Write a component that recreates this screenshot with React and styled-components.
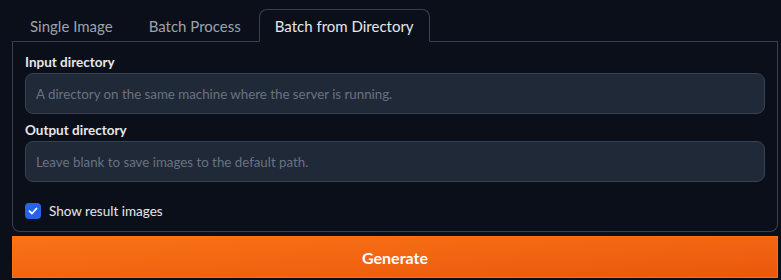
import React, { useState } from "react";
import styled, { createGlobalStyle } from "styled-components";

const GlobalStyle = createGlobalStyle`
  html, body {
    margin: 0;
    padding: 0;
    background: #0b0f19;
  }
  body {
    font-family: Lato, "Noto Sans", sans-serif;
    color: #f3f4f6;
  }
`;

const Page = styled.div`
  width: 781px;
  height: 280px;
  box-sizing: border-box;
  padding: 9px 3px 0 12px;
  background: #0b0f19;
`;

const TabBar = styled.div`
  display: flex;
  height: 33px;
  border-bottom: 1px solid #374151;
  box-sizing: border-box;
`;

const Tab = styled.button`
  height: ${({ $active }) => ($active ? "33px" : "32px")};
  padding: 0 ${({ $active }) => ($active ? "15px" : "17px")};
  padding-top: 1px;
  background: #0b0f19;
  border: 1px solid ${({ $active }) => ($active ? "#374151" : "transparent")};
  border-bottom: ${({ $active }) => ($active ? "1px solid #0b0f19" : "none")};
  border-radius: 8px 8px 0 0;
  color: ${({ $active }) => ($active ? "#e5e7eb" : "#9ca3af")};
  font-family: Lato, "Noto Sans", sans-serif;
  font-size: 15px;
  cursor: pointer;
  box-sizing: border-box;
  position: relative;
  z-index: 1;
`;

const Panel = styled.div`
  border: 1px solid #374151;
  border-top: none;
  border-radius: 0 0 8px 8px;
  padding: 12px 12px 0 12px;
  height: 190px;
  box-sizing: border-box;
  display: flex;
  flex-direction: column;
`;

const Field = styled.label`
  display: flex;
  flex-direction: column;
  gap: 2px;
  margin-bottom: 8px;
`;

const Label = styled.span`
  font-size: 13.5px;
  font-weight: 700;
  color: #e5e7eb;
  line-height: 17px;
`;

const Input = styled.input`
  height: 41px;
  box-sizing: border-box;
  background: #1f2937;
  border: 1px solid #374151;
  border-radius: 8px;
  padding: 0 10px;
  color: #e5e7eb;
  font-family: Lato, "Noto Sans", sans-serif;
  font-size: 13.3px;
  outline: none;
  &::placeholder {
    color: #6b7280;
  }
`;

const CheckRow = styled.label`
  display: flex;
  align-items: center;
  gap: 8px;
  margin-top: 13px;
  font-size: 13.5px;
  color: #e5e7eb;
  line-height: 16px;
  cursor: pointer;
`;

const Box = styled.span`
  width: 16px;
  height: 16px;
  border-radius: 4px;
  background: #2563eb;
  display: flex;
  align-items: center;
  justify-content: center;
`;

const GenerateButton = styled.button`
  margin-top: 4px;
  width: 766px;
  height: 42px;
  border: 1px solid #f97316;
  background: linear-gradient(to bottom right, #f97316, #ea580c);
  color: #ffffff;
  font-family: Lato, "Noto Sans", sans-serif;
  font-size: 16px;
  font-weight: 700;
  cursor: pointer;
`;

const tabs = ["Single Image", "Batch Process", "Batch from Directory"];

export default function App() {
  const [active, setActive] = useState(2);
  const [checked, setChecked] = useState(true);
  return (
    <Page>
      <GlobalStyle />
      <TabBar>
        {tabs.map((t, i) => (
          <Tab key={t} $active={i === active} onClick={() => setActive(i)}>
            {t}
          </Tab>
        ))}
      </TabBar>
      <Panel>
        <Field>
          <Label>Input directory</Label>
          <Input placeholder="A directory on the same machine where the server is running." />
        </Field>
        <Field>
          <Label>Output directory</Label>
          <Input placeholder="Leave blank to save images to the default path." />
        </Field>
        <CheckRow onClick={() => setChecked(!checked)}>
          <Box>
            {checked && (
              <svg width="10" height="10" viewBox="0 0 10 10">
                <path d="M1.5 5.2 L4 7.5 L8.5 2.5" stroke="#fff" strokeWidth="1.8" fill="none" strokeLinecap="round" strokeLinejoin="round" />
              </svg>
            )}
          </Box>
          Show result images
        </CheckRow>
      </Panel>
      <GenerateButton>Generate</GenerateButton>
    </Page>
  );
}
